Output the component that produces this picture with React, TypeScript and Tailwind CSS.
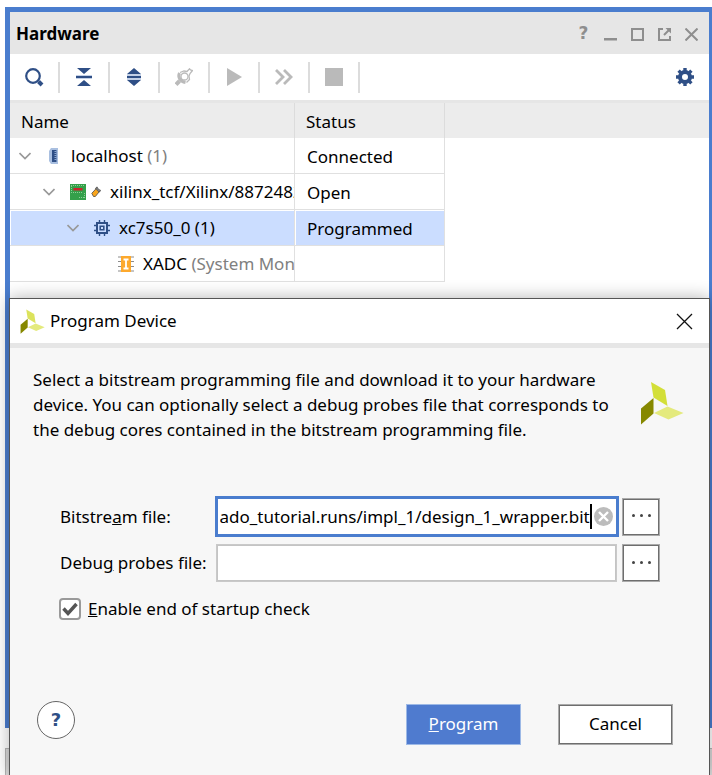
import { useEffect, useRef, useState } from "react";
import type { ReactNode } from "react";

const BODY_FONT = "font-['Noto_Sans','Open_Sans',sans-serif]";

function ToolButton({ label, disabled, children }: { label: string; disabled?: boolean; children: ReactNode }) {
  return (
    <button
      type="button"
      aria-label={label}
      disabled={disabled}
      className="flex h-[31px] w-[50px] items-center justify-center border-r-2 border-[#dcdcdc]"
    >
      {children}
    </button>
  );
}

function WindowButton({ label, children }: { label: string; children: ReactNode }) {
  return (
    <button type="button" aria-label={label} className="flex h-6 w-[27px] items-center justify-center text-[#8e8e8e]">
      {children}
    </button>
  );
}

function Chevron() {
  return (
    <svg width="12" height="8" viewBox="0 0 12 8" className="shrink-0" fill="none" stroke="#999" strokeWidth="1.7">
      <path d="M.5 1 6 6.5 11.5 1" />
    </svg>
  );
}

function Logo({ size, blade }: { size: number; blade: string }) {
  return (
    <svg width={size} height={size} viewBox="0 0 44 44" className="shrink-0" aria-hidden="true">
      <path d="M11 1 25 9 27.5 25 13.5 16.5z" fill={blade} />
      <path d="M1 27.5 13.5 17V32.5L1 43.5z" fill="#868800" />
      <path d="M14 32 27.5 25.5 43.5 32 28.5 38.5z" fill="#e4ea7d" />
    </svg>
  );
}

function ServerIcon() {
  return (
    <svg width="9" height="16" viewBox="0 0 9 16" className="shrink-0">
      <path d="M2 0h7v16H2L0 13V3z" fill="#a9bfe0" />
      <path d="M3 2h4.5v12H3z" fill="#2f4f86" />
      <path d="M5.5 3.5h2M5.5 5.5h2M5.5 7.5h2M5.5 9.5h2M5.5 11.5h2" stroke="#8fa9d2" />
    </svg>
  );
}

function BoardIcon() {
  return (
    <svg width="16" height="16" viewBox="0 0 16 16" className="shrink-0">
      <path d="M0 0h16v16H0z" fill="#34a04a" />
      <path d="M3.5 4h9v2.5h-9z" fill="#c9252d" />
      <path d="M1 1.5h13M1.500 2v7M3 8.500h10M14.500 9v6M9 13.500h6" stroke="#8ccf96" strokeDasharray="1 1" />
    </svg>
  );
}

function PlugIcon() {
  return (
    <svg width="10" height="12" viewBox="0 0 10 12" className="shrink-0" fill="none">
      <path d="M4.500 3 6.500 1M8 6l1.500-2" stroke="#555" strokeWidth="1.500" />
      <path d="M5.500 2 9 5" stroke="#777" strokeWidth="2" />
      <path d="M.8 7.300 4.800 3 8 6 4.300 10.500 2.500 10.500z" fill="#f9a51a" stroke="#6b6255" />
    </svg>
  );
}

function ChipIcon() {
  return (
    <svg width="16" height="16" viewBox="0 0 16 16" className="shrink-0" fill="none" stroke="#2f4f86">
      <path d="M5.500 0v16M10.500 0v16M0 5.500h16M0 10.500h16" strokeWidth="1.400" />
      <path d="M3 3h10v10H3z" fill="#cbddff" strokeWidth="2" />
      <path d="M6.200 6.200h3.600v3.600H6.200z" strokeWidth="1.600" />
    </svg>
  );
}

function MonitorIcon() {
  return (
    <svg width="16" height="16" viewBox="0 0 16 16" className="shrink-0">
      <path d="M0 1h16M0 5.5h16M0 10.5h16M0 15h16" stroke="#8b8b8b" />
      <path d="M3 0h10v16H3z" fill="#fda92d" />
      <path d="M5.5 3.5h5M8 3.5v9M5.5 12.5h5" stroke="#fff" strokeWidth="1.8" fill="none" />
    </svg>
  );
}

type Row = {
  pad: string;
  open: boolean;
  icon: ReactNode;
  name: string;
  note?: string;
  status: string;
  selected?: boolean;
};

const rows: Row[] = [
  {
    pad: "pl-[9px]",
    open: true,
    icon: <span className="ml-[18px] mr-[13px] flex"><ServerIcon /></span>,
    name: "localhost",
    note: "(1)",
    status: "Connected",
  },
  {
    pad: "pl-[33px]",
    open: true,
    icon: <span className="ml-[15px] mr-[9px] flex items-center gap-[5px]"><BoardIcon /><PlugIcon /></span>,
    name: "xilinx_tcf/Xilinx/8872482",
    status: "Open",
  },
  {
    pad: "pl-[57px]",
    open: true,
    icon: <span className="ml-[15px] mr-[9px] flex"><ChipIcon /></span>,
    name: "xc7s50_0 (1)",
    status: "Programmed",
    selected: true,
  },
  {
    pad: "pl-[108px]",
    open: false,
    icon: <span className="mr-[9px] flex"><MonitorIcon /></span>,
    name: "XADC",
    note: "(System Mon",
    status: "",
  },
];

function HardwarePanel() {
  return (
    <section className="flex flex-1 flex-col border-[5px] border-r-[3px] border-[#4a7dce] bg-white">
      <header className="flex h-[42px] items-center bg-[#e6e6e6] pl-[6px] pr-1 pt-0.5">
        <h1 className="flex-1 text-[17px] font-bold">Hardware</h1>
        <WindowButton label="Help">
          <span className="font-['DejaVu_Sans',sans-serif] text-[17px] font-bold">?</span>
        </WindowButton>
        <WindowButton label="Minimize">
          <svg width="13" height="13"><path d="M0 10h13v2.5H0z" fill="currentColor" /></svg>
        </WindowButton>
        <WindowButton label="Maximize">
          <svg width="13" height="13" fill="none" stroke="currentColor" strokeWidth="2"><path d="M1 1h11v11H1z" /></svg>
        </WindowButton>
        <WindowButton label="Float">
          <svg width="13" height="13" fill="none" stroke="currentColor" strokeWidth="2">
            <path d="M5 1H1v11h11V8M6 7l5-5" />
            <path d="M7.5 0H13v5.5z" fill="currentColor" stroke="none" />
          </svg>
        </WindowButton>
        <WindowButton label="Close">
          <svg width="13" height="13" stroke="currentColor" strokeWidth="2"><path d="M.5.5l12 12M12.500.5l-12 12" /></svg>
        </WindowButton>
      </header>

      <div className="flex h-[49px] items-center border-b-[3px] border-[#e6e6e6]">
        <ToolButton label="Search">
          <svg width="20" height="20" viewBox="0 0 20 20" fill="none" stroke="#2f4f86">
            <circle cx="9" cy="9" r="6.8" strokeWidth="2.2" />
            <path d="m14.500 14.500 3.500 3.500" strokeWidth="4" />
          </svg>
        </ToolButton>
        <ToolButton label="Collapse all">
          <svg width="16" height="18" viewBox="0 0 16 18" fill="#2f4f86">
            <path d="M0 7h16v4H0z" fill="#c3d0e6" />
            <path d="M1 0h14L8 6zM0 8h16v2H0zM1 18h14l-7-6z" />
          </svg>
        </ToolButton>
        <ToolButton label="Expand all">
          <svg width="14" height="18" viewBox="0 0 14 18" fill="#2f4f86">
            <path d="M0 6h14v6H0z" fill="#c3d0e6" />
            <path d="M0 6h14L7 0zM0 8h14v2H0zM0 12h14l-7 6z" />
          </svg>
        </ToolButton>
        <ToolButton label="Auto connect" disabled>
          <svg width="18" height="18" viewBox="0 0 18 18" fill="none" stroke="#bababa">
            <path d="M5 4.500 9 3l3 .5L14.500.8l1 1.200 2 .5-2.500 3L14 8l.5 3.500-3 3" strokeWidth="1.300" />
            <path d="M4.500 5C2.500 9 5 13.500 10.500 14.500" strokeWidth="3" />
            <circle cx="9.500" cy="8.500" r="3.500" strokeWidth="1.300" />
            <path d="m4.500 13-3.500 3.500" strokeWidth="4" />
          </svg>
        </ToolButton>
        <ToolButton label="Run" disabled>
          <svg width="15" height="18" viewBox="0 0 15 18"><path d="M0 0v18l15-9z" fill="#bababa" /></svg>
        </ToolButton>
        <ToolButton label="Run immediately" disabled>
          <svg width="18" height="16" viewBox="0 0 18 16" fill="none" stroke="#bababa" strokeWidth="2.800">
            <path d="m1 1 7 7-7 7M9 1l7 7-7 7" />
          </svg>
        </ToolButton>
        <ToolButton label="Stop" disabled>
          <span className="size-[18px] bg-[#bababa]" />
        </ToolButton>
        <button type="button" aria-label="Settings" className="ml-auto flex w-12 justify-center">
          <svg width="18" height="18" viewBox="0 0 18 18" fill="none" stroke="#2f4f86">
            <circle cx="9" cy="9" r="5" strokeWidth="4" />
            <path
              d="M9 0v3M9 15v3M0 9h3M15 9h3M2.600 2.600l2 2M13.400 13.400l2 2M2.600 15.400l2-2M13.400 4.600l2-2"
              strokeWidth="3.400"
            />
          </svg>
        </button>
      </div>

      <table className="w-full table-fixed border-separate border-spacing-0 text-left text-[17px]">
        <colgroup>
          <col className="w-[285px]" />
          <col className="w-[150px]" />
          <col />
        </colgroup>
        <thead>
          <tr className="h-[35px] bg-[#ececec]">
            <th className="border-r border-[#dcdcdc] p-0 pl-[11px] pt-0.5 font-normal">Name</th>
            <th className="border-r border-[#dcdcdc] p-0 pl-[11px] pt-0.5 font-normal">Status</th>
            <td />
          </tr>
        </thead>
        <tbody>
          {rows.map((row) => {
            const fill = row.selected ? "bg-[#cbddff] shadow-[inset_1px_1px_0_#fff]" : "";
            return (
              <tr key={row.name} className="h-9">
                <td className={`overflow-hidden border-b border-r border-[#e0e0e0] p-0 ${fill}`}>
                  <div className={`flex items-center whitespace-nowrap ${row.pad}`}>
                    {row.open && <Chevron />}
                    {row.icon}
                    <span>
                      {row.name}
                      {row.note && <span className="text-[#808080]"> {row.note}</span>}
                    </span>
                  </div>
                </td>
                <td className={`border-b border-r border-[#e0e0e0] p-0 pl-3 pt-0.5 ${fill}`}>{row.status}</td>
                <td />
              </tr>
            );
          })}
        </tbody>
      </table>
    </section>
  );
}

function BrowseButton({ label }: { label: string }) {
  return (
    <button
      type="button"
      aria-label={label}
      className="flex size-[38px] items-center justify-center gap-[5px] border border-[#aaa] bg-white pb-0.5 shadow-[inset_0_0_0_1px_#6e6e6e]"
    >
      <span className="size-[3px] rounded-full bg-[#444]" />
      <span className="size-[3px] rounded-full bg-[#444]" />
      <span className="size-[3px] rounded-full bg-[#444]" />
    </button>
  );
}

function ProgramDialog() {
  const bitRef = useRef<HTMLInputElement>(null);
  const [bitFile, setBitFile] = useState("C:/vivado_tutorial/vivado_tutorial.runs/impl_1/design_1_wrapper.bit");
  const [probes, setProbes] = useState("");
  const [check, setCheck] = useState(true);

  // Keep the end of the path in view.
  useEffect(() => {
    const el = bitRef.current;
    if (el) el.scrollLeft = el.scrollWidth;
  }, [bitFile]);

  return (
    <div
      role="dialog"
      aria-labelledby="dialog-title"
      className="absolute bottom-0 left-[9px] right-0.5 top-[298px] flex flex-col border border-b-0 border-[#555] bg-[#f7f7f7] text-[17px] shadow-[0_0_16px_rgba(0,0,0,0.3)]"
    >
      <header className="flex h-[49px] shrink-0 items-center border-b-[5px] border-[#e6e6e6] bg-white pl-[10px] pr-4">
        <Logo size={25} blade="#dce35c" />
        <h2 id="dialog-title" className="ml-[5px] flex-1">Program Device</h2>
        <button type="button" aria-label="Close dialog">
          <svg width="17" height="17" stroke="#111" strokeWidth="1.300"><path d="m1 1 15 15M16 1 1 16" /></svg>
        </button>
      </header>

      <div className="flex justify-between pl-[23px] pr-[25px] pt-[19px]">
        <p className="leading-[25px]">
          Select a bitstream programming file and download it to your hardware
          <br />
          device. You can optionally select a debug probes file that corresponds to
          <br />
          the debug cores contained in the bitstream programming file.
        </p>
        <span className="mt-[14px] flex">
          <Logo size={44} blade="#d3df38" />
        </span>
      </div>

      <form className="mt-[54px] pl-[50px] pr-[49px]">
        <div className="grid grid-cols-[155px_1fr_38px] items-center gap-y-[7px]">
          <label htmlFor="bit">Bitstre<u>a</u>m file:</label>
          <div className="mr-[3px] flex h-[41px] items-center border-[3px] border-[#4a7dce] bg-white pl-[2px] pr-[3px]">
            <input
              id="bit"
              ref={bitRef}
              value={bitFile}
              onChange={(e) => setBitFile(e.target.value)}
              className="min-w-0 flex-1 outline-none"
            />
            <span className="h-[25px] w-0.5 bg-black" />
            <button type="button" aria-label="Clear" onClick={() => setBitFile("")} className="ml-0.5">
              <svg width="19" height="19" viewBox="0 0 19 19">
                <circle cx="9.500" cy="9.500" r="9.500" fill="#bcbcbc" />
                <path d="m5 5 9 9M14 5l-9 9" stroke="#fff" strokeWidth="2.400" />
              </svg>
            </button>
          </div>
          <BrowseButton label="Browse bitstream file" />

          <label htmlFor="probes">Debu<u>g</u> probes file:</label>
          <input
            id="probes"
            value={probes}
            onChange={(e) => setProbes(e.target.value)}
            className="ml-px mr-[5px] h-[38px] min-w-0 border border-[#c9c9c9] bg-white px-1 shadow-[inset_0_0_0_1px_#c4c4c4] outline-none"
          />
          <BrowseButton label="Browse debug probes file" />
        </div>

        <label className="mt-[14px] flex items-center gap-[7px]">
          <span className="relative -ml-px flex size-[22px]">
            <input
              type="checkbox"
              checked={check}
              onChange={(e) => setCheck(e.target.checked)}
              className="size-[22px] appearance-none rounded border-2 border-[#9a9a9a] bg-white"
            />
            {check && (
              <svg viewBox="0 0 22 22" className="pointer-events-none absolute inset-0" fill="none" stroke="#555" strokeWidth="3.400">
                <path d="m4.500 10.500 4.500 5 8.500-9.500" />
              </svg>
            )}
          </span>
          <span><u>E</u>nable end of startup check</span>
        </label>
      </form>

      <footer className="mt-[79px] flex items-start pl-[27px] pr-9">
        <button
          type="button"
          aria-label="Help"
          className="flex size-[38px] items-center justify-center rounded-full border border-[#666] bg-white font-['DejaVu_Sans',sans-serif] text-[18px] font-bold text-[#2f4f86]"
        >
          ?
        </button>
        <div className="ml-auto flex gap-[37px] pt-[3px]">
          <button type="button" className="h-[41px] w-[115px] border border-[#9db9e6] bg-[#4f7bcf] text-white">
            <u>P</u>rogram
          </button>
          <button
            type="button"
            className="h-[41px] w-[115px] border border-[#aaa] bg-white shadow-[inset_0_0_0_1px_#6e6e6e]"
          >
            Cancel
          </button>
        </div>
      </footer>
    </div>
  );
}

export default function App() {
  return (
    <main className={`relative flex min-h-screen flex-col overflow-hidden bg-white pl-[5px] pt-[7px] text-black ${BODY_FONT}`}>
      <HardwarePanel />
      <div className="mt-5 h-[27px] border-l border-t border-[#b5b5b5] bg-[#dadada]" />
      <ProgramDialog />
    </main>
  );
}
